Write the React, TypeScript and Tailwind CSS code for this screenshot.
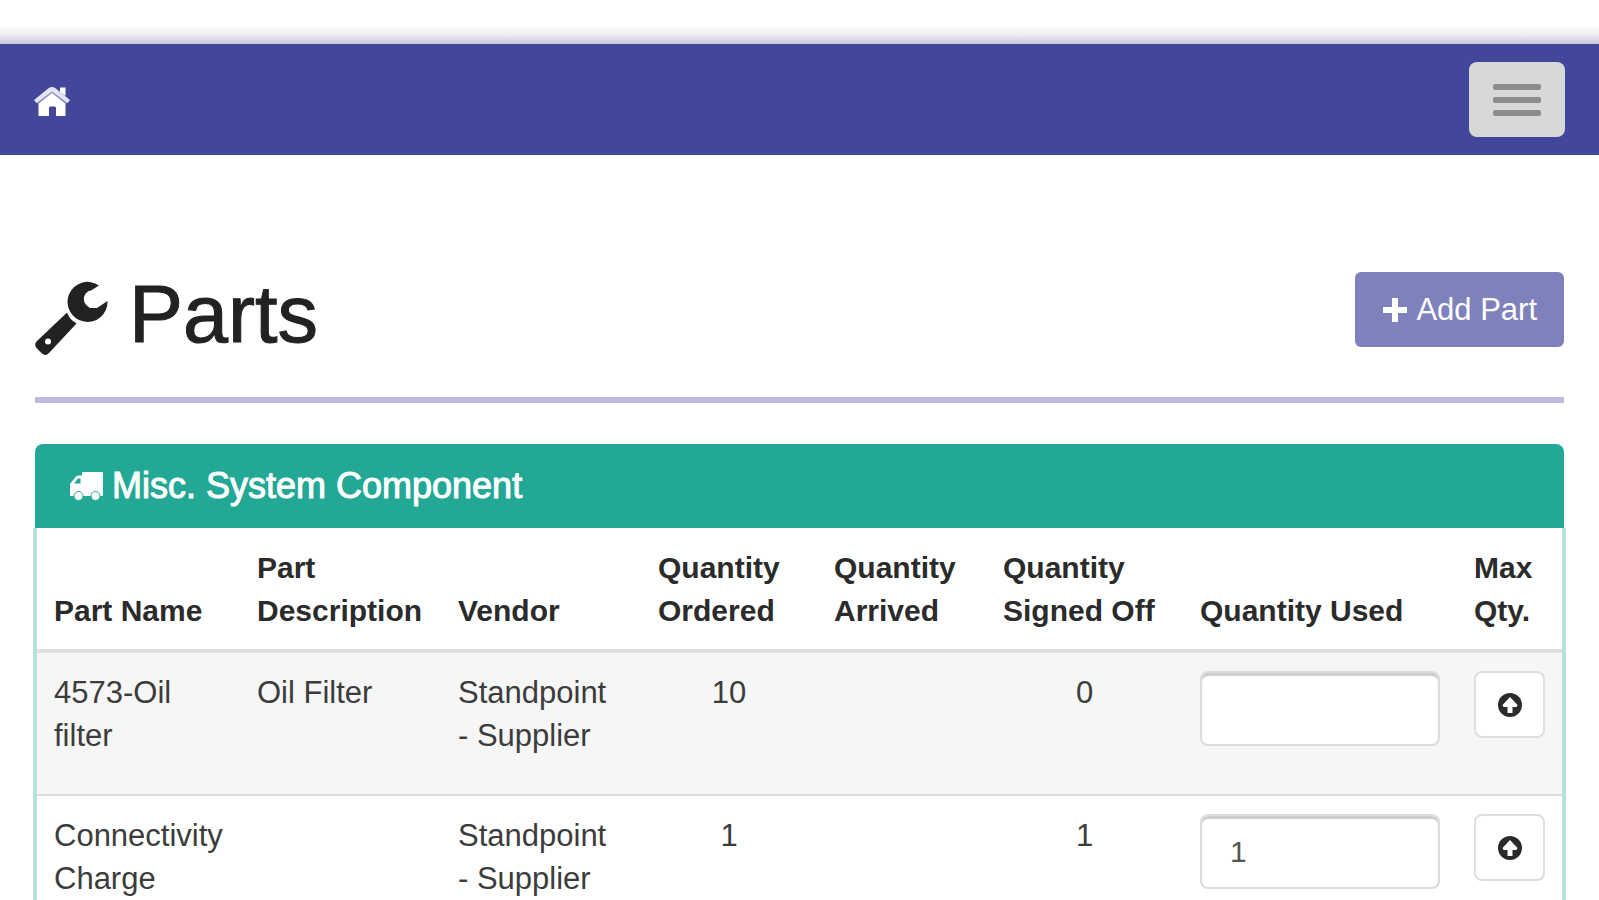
import { useState } from 'react'

interface Part {
  name: string
  description: string
  vendor: string
  ordered: number
  arrived: string
  signedOff: number
  used: string
}

const initialParts: Part[] = [
  { name: '4573-Oil filter', description: 'Oil Filter', vendor: 'Standpoint -\u00a0Supplier', ordered: 10, arrived: '', signedOff: 0, used: '' },
  { name: 'Connectivity Charge', description: '', vendor: 'Standpoint -\u00a0Supplier', ordered: 1, arrived: '', signedOff: 1, used: '1' },
]

function HomeIcon() {
  return (
    <svg viewBox="0 0 36 30" className="h-[30px] w-9" aria-hidden="true">
      <path d="M4.500 15.500 L18 4 L31.500 15.500 V29 H22 V21 Q22 19.500 20.500 19.500 H16.500 Q15 19.500 15 21 V29 H4.500 Z" fill="#fff" />
      <path d="M3 15.500 L18 3.500 L33 15.500" fill="none" stroke="#8a8dc4" strokeWidth="4" />
      <path d="M0 13 L14.500 1.200 Q18 -1 21.500 1.200 L36 13 L33.500 16 L18 4.500 L2.500 16 Z" fill="#e4e4f4" />
      <path d="M26 0.500 H31.500 V9 L26 5 Z" fill="#fff" />
    </svg>
  )
}

function WrenchIcon() {
  return (
    <svg viewBox="10 11 74 75" className="h-[75px] w-[74px] self-end" fill="#222" aria-hidden="true">
      <path d="M74 15.500 A20 20 0 1 0 82.500 31 L72 38 H65 Q58 34 59 27 Q61 21 66 20.500 Z" />
      <path
        fillRule="evenodd"
        d="M42 42.500 Q44.500 49.500 51.500 53.500 L24 83 Q20.500 86.500 17 83.500 L11.500 78 Q8.500 74.500 12 71 Z M23 68.500 A3 3 0 1 0 23 74.500 A3 3 0 1 0 23 68.500 Z"
      />
    </svg>
  )
}

function TruckIcon() {
  return (
    <svg viewBox="0 0 33 29" className="h-[29px] w-[33px]" aria-hidden="true">
      <path d="M12 1 Q12 0 13 0 H32 Q33 0 33 1 V23 Q33 24 32 24 H1 Q0 24 0 23 V12 L6 4.500 Q7 3.500 8.500 3.500 H12 Z" fill="#fff" />
      <path d="M4 11.500 L8 6.500 H10.500 V11.500 Z" fill="#24a896" />
      <g fill="#fff" stroke="#24a896" strokeWidth="1">
        <circle cx="8.500" cy="24" r="4.500" />
        <circle cx="25.500" cy="24" r="4.500" />
      </g>
    </svg>
  )
}

function PlusIcon() {
  return (
    <svg viewBox="0 0 26 26" className="size-[26px]" fill="#fff" aria-hidden="true">
      <path d="M10 1 H16 V10 H25 V16 H16 V25 H10 V16 H1 V10 H10 Z" />
    </svg>
  )
}

function UploadIcon() {
  return (
    <svg viewBox="0 0 24 24" className="size-6" aria-hidden="true">
      <circle cx="12" cy="12" r="12" fill="#2b2b2b" />
      <path d="M12 4 L19.500 12 L18.500 14 H14.500 V20 H9.500 V14 H5.500 L4.500 12 Z" fill="#fff" />
    </svg>
  )
}

const th = 'px-[17px] pt-[18px] pb-[17px] text-left align-bottom font-bold border-b-4 border-[#dedede]'
const td = 'px-[17px] pt-[18px] pb-4 align-top border-b-2 border-[#dedede]'

export default function App() {
  const [parts, setParts] = useState(initialParts)

  function setUsed(index: number, used: string) {
    setParts(parts.map((p, i) => (i === index ? { ...p, used } : p)))
  }

  return (
    <div className="bg-white pt-[26px] font-['Liberation_Sans',Arial,sans-serif] text-[30px] leading-[43px] text-[#3c3c3c]">
      {/* soft shade above the navbar */}
      <div className="h-[18px] bg-linear-to-b from-white via-[#ececf5] to-[#c9c7dc]" />
      <nav className="flex h-[111px] items-center justify-between bg-[#42479b] px-[34px]">
        <a href="#" aria-label="Home" className="pt-1">
          <HomeIcon />
        </a>
        <button aria-label="Toggle navigation" className="flex h-[75px] w-24 flex-col items-center justify-center gap-[7px] rounded-lg bg-[#d8d8d8]">
          <span className="h-1.5 w-12 rounded-xs bg-[#8c8c8c]" />
          <span className="h-1.5 w-12 rounded-xs bg-[#8c8c8c]" />
          <span className="h-1.5 w-12 rounded-xs bg-[#8c8c8c]" />
        </button>
      </nav>

      <main className="px-[33px]">
        <div className="mx-0.5 flex items-start justify-between border-b-[6px] border-[#bfbadb] pt-[117px] pb-[41px]">
          <h1 className="flex items-center gap-5 text-[81px] leading-[84px] text-[#222] [-webkit-text-stroke:1px]">
            <WrenchIcon />
            Parts
          </h1>
          <button className="flex h-[75px] items-center gap-2 rounded-md bg-[#7f81bc] px-[27px] text-[31px] text-white">
            <PlusIcon />
            Add Part
          </button>
        </div>

        <section className="mt-[41px]">
          <h2 className="mx-0.5 flex h-[84px] items-center gap-[9px] rounded-t-lg bg-[#24a896] px-[35px] text-4xl text-white [-webkit-text-stroke:1px]">
            <TruckIcon />
            Misc. System Component
          </h2>
          <div className="border-x-4 border-[#b2e2d8]">
            <table className="w-full table-fixed border-separate border-spacing-0">
              <colgroup>
                <col />
                <col className="w-[201px]" />
                <col className="w-[200px]" />
                <col className="w-[176px]" />
                <col className="w-[169px]" />
                <col className="w-[197px]" />
                <col className="w-[274px]" />
                <col className="w-[105px]" />
              </colgroup>
              <thead className="text-[#2b2b2b]">
                <tr>
                  <th className={th}>Part Name</th>
                  <th className={th}>Part Description</th>
                  <th className={th}>Vendor</th>
                  <th className={th}>Quantity Ordered</th>
                  <th className={th}>Quantity Arrived</th>
                  <th className={th}>Quantity Signed Off</th>
                  <th className={th}>Quantity Used</th>
                  <th className={th}>Max Qty.</th>
                </tr>
              </thead>
              <tbody className="text-[31px]">
                {parts.map((part, i) => (
                  <tr key={part.name} className="odd:bg-[#f6f6f6]">
                    <td className={td}>{part.name}</td>
                    <td className={td}>{part.description}</td>
                    <td className={td}>{part.vendor}</td>
                    <td className={`${td} text-center`}>{part.ordered}</td>
                    <td className={`${td} text-center`}>{part.arrived}</td>
                    <td className={`${td} text-center`}>{part.signedOff}</td>
                    <td className={td}>
                      <input
                        type="text"
                        aria-label={`Quantity used, ${part.name}`}
                        value={part.used}
                        onChange={(e) => setUsed(i, e.target.value)}
                        className="mb-8 block h-[75px] w-full rounded-lg border-2 border-[#dcdcdc] bg-white px-7 text-[30px] text-[#555] shadow-[inset_0_3px_1px_#cccccc]"
                      />
                    </td>
                    <td className={td}>
                      <button
                        aria-label={`Use max quantity, ${part.name}`}
                        onClick={() => setUsed(i, String(part.signedOff))}
                        className="flex h-[67px] w-full items-center justify-center rounded-lg border-2 border-[#dedede] bg-white"
                      >
                        <UploadIcon />
                      </button>
                    </td>
                  </tr>
                ))}
              </tbody>
            </table>
          </div>
        </section>
      </main>
    </div>
  )
}
